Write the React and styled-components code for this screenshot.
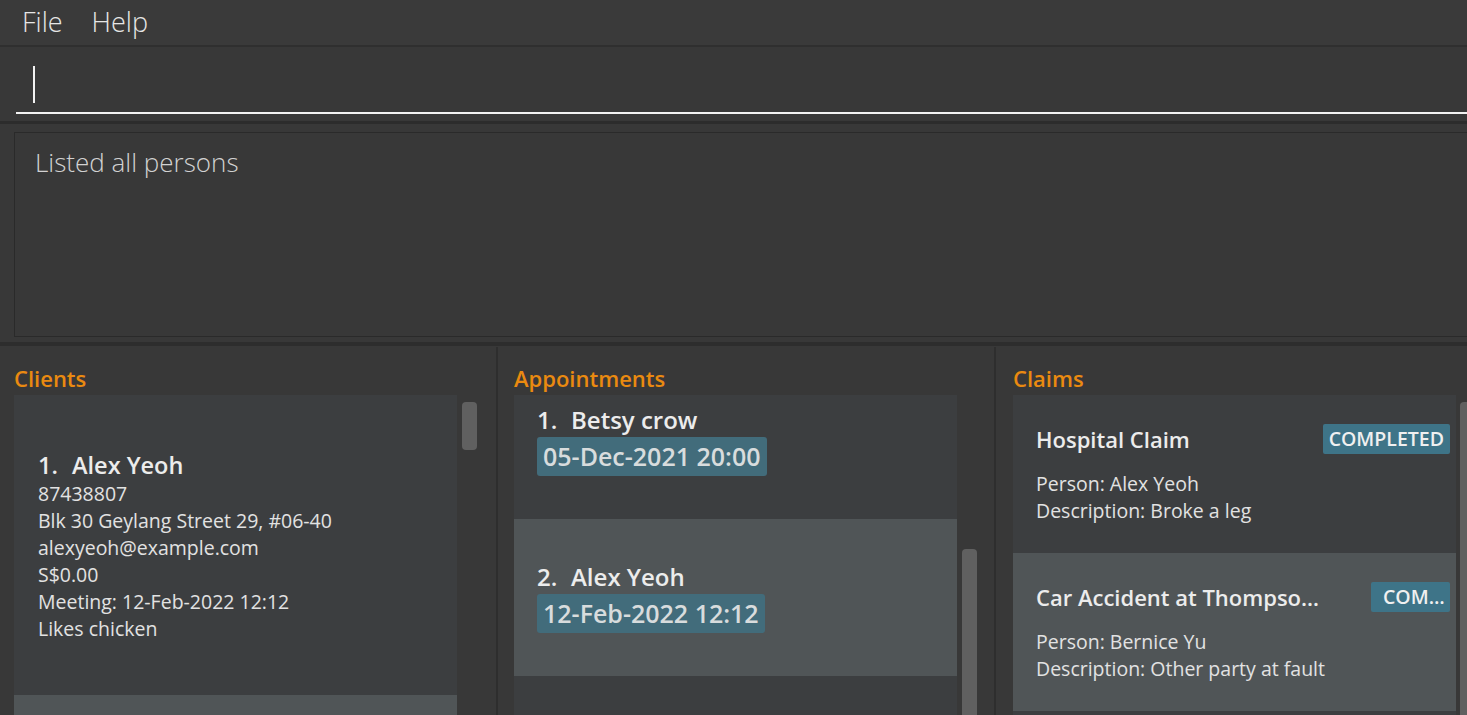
import React from 'react'
import styled, { createGlobalStyle } from 'styled-components'

const GlobalStyle = createGlobalStyle`
  html, body {
    margin: 0;
    padding: 0;
    background: #383838;
  }
  body {
    font-family: 'Open Sans', 'Noto Sans', sans-serif;
    color: #e4e4e4;
  }
  #root {
    height: 715px;
    overflow: hidden;
  }
`

const clients = [
  {
    name: 'Alex Yeoh',
    lines: [
      '87438807',
      'Blk 30 Geylang Street 29, #06-40',
      'alexyeoh@example.com',
      'S$0.00',
      'Meeting: 12-Feb-2022 12:12',
      'Likes chicken',
    ],
  },
]

const appointments = [
  { name: 'Betsy crow', date: '05-Dec-2021 20:00' },
  { name: 'Alex Yeoh', date: '12-Feb-2022 12:12' },
]

const claims = [
  { title: 'Hospital Claim', status: 'COMPLETED', person: 'Alex Yeoh', description: 'Broke a leg' },
  {
    title: 'Car Accident at Thompson Road',
    status: 'COMPLETED',
    person: 'Bernice Yu',
    description: 'Other party at fault',
    squeezed: true,
  },
]

const App = () => (
  <Window>
    <GlobalStyle />
    <MenuBar>
      <MenuItem>File</MenuItem>
      <MenuItem>Help</MenuItem>
    </MenuBar>

    <CommandBox>
      <CommandField>
        <Caret />
      </CommandField>
    </CommandBox>

    <ResultArea>
      <ResultBox>Listed all persons</ResultBox>
    </ResultArea>

    <Panels>
      <Panel $pad={14}>
        <PanelTitle>Clients</PanelTitle>
        <PanelBody>
          <ListView>
            {clients.map((c, i) => (
              <PersonCard key={c.name} $alt={i % 2 === 1}>
                <CardName>
                  <Index>{i + 1}.</Index>
                  {c.name}
                </CardName>
                {c.lines.map(line => (
                  <Detail key={line}>{line}</Detail>
                ))}
              </PersonCard>
            ))}
            {/* empty cells keep the striped look of the list */}
            <EmptyCell $alt={clients.length % 2 === 1} />
          </ListView>
          <ScrollTrack>
            <Thumb $top={7} $height={48} />
          </ScrollTrack>
        </PanelBody>
      </Panel>

      <Panel $pad={16}>
        <PanelTitle>Appointments</PanelTitle>
        <PanelBody>
          <ListView>
            <Scrolled $offset={33}>
              {appointments.map((a, i) => (
                <ApptCard key={a.name} $alt={i % 2 === 1}>
                  <ApptName>
                    <Index>{i + 1}.</Index>
                    {a.name}
                  </ApptName>
                  <DateTag>{a.date}</DateTag>
                </ApptCard>
              ))}
            </Scrolled>
          </ListView>
          <ScrollTrack>
            <Thumb $top={154} $height={240} />
          </ScrollTrack>
        </PanelBody>
      </Panel>

      <Panel $pad={17} $last>
        <PanelTitle>Claims</PanelTitle>
        <PanelBody>
          <ListView>
            {claims.map((c, i) => (
              <ClaimCard key={c.title} $alt={i % 2 === 1}>
                <ClaimHead>
                  <ClaimTitle>{c.title}</ClaimTitle>
                  <Badge $squeezed={c.squeezed}>{c.status}</Badge>
                </ClaimHead>
                <Detail>Person: {c.person}</Detail>
                <Detail>Description: {c.description}</Detail>
              </ClaimCard>
            ))}
          </ListView>
          <ScrollTrack $narrow>
            <Thumb $top={7} $height={400} />
          </ScrollTrack>
        </PanelBody>
      </Panel>
    </Panels>
  </Window>
)

export default App

const Window = styled.div`
  display: flex;
  flex-direction: column;
  height: 715px;
  background: #383838;
`

const MenuBar = styled.div`
  display: flex;
  align-items: center;
  gap: 29px;
  box-sizing: border-box;
  padding: 0 0 3px 22px;
  border-bottom: 2px solid #2f2f2f;
  background: #3a3a3a;
  flex: 0 0 auto;
  height: 47px;
`

const MenuItem = styled.span`
  font-size: 27px;
  font-weight: 300;
  color: #e6e6e6;
`

const CommandBox = styled.div`
  flex: 0 0 auto;
  height: 77px;
  padding-left: 16px;
  border-bottom: 3px solid #2c2c2c;
  box-sizing: border-box;
`

const CommandField = styled.div`
  height: 67px;
  border-bottom: 2px solid #f2f2f2;
  box-sizing: border-box;
  padding: 19px 0 0 17px;
`

const Caret = styled.div`
  width: 2px;
  height: 37px;
  background: #f2f2f2;
`

const ResultArea = styled.div`
  flex: 0 0 auto;
  padding: 8px 0 0 14px;
  height: 222px;
  box-sizing: border-box;
  border-bottom: 4px solid #2d2d2d;
`

const ResultBox = styled.div`
  height: 205px;
  box-sizing: border-box;
  border: 1px solid #2a2a2a;
  border-right: none;
  padding: 11px 20px;
  font-size: 26px;
  font-weight: 300;
  color: #d2d2d2;
`

const Panels = styled.div`
  display: grid;
  grid-template-columns: 498px 498px 1fr;
  flex: 1;
  min-height: 0;
  padding-top: 1px;
`

const Panel = styled.section`
  display: flex;
  flex-direction: column;
  min-height: 0;
  padding-left: ${p => p.$pad}px;
  border-right: ${p => (p.$last ? 'none' : '2px solid #2e2e2e')};
`

const PanelTitle = styled.h2`
  margin: 0;
  height: 48px;
  box-sizing: border-box;
  padding-top: 17px;
  font-size: 22px;
  line-height: 28px;
  font-weight: 600;
  color: #ea8a10;
`

const PanelBody = styled.div`
  display: flex;
  flex: 1;
  min-height: 0;
`

const ListView = styled.div`
  flex: 0 0 443px;
  background: #3c3e40;
  overflow: hidden;
`

const Scrolled = styled.div`
  margin-top: -${p => p.$offset}px;
`

const ScrollTrack = styled.div`
  position: relative;
  flex: 1;
  margin-left: ${p => (p.$narrow ? 4 : 5)}px;
`

const Thumb = styled.div`
  position: absolute;
  left: 0;
  top: ${p => p.$top}px;
  width: 15px;
  height: ${p => p.$height}px;
  border-radius: 4px;
  background: #606060;
`

const CardBase = styled.div`
  background: ${p => (p.$alt ? '#505557' : '#3c3e40')};
  box-sizing: border-box;
  padding-left: 24px;
`

const PersonCard = styled(CardBase)`
  height: 300px;
  display: flex;
  flex-direction: column;
  justify-content: center;
  padding-top: 2px;
`

const EmptyCell = styled(CardBase)`
  height: 300px;
`

const ApptCard = styled(CardBase)`
  height: 157px;
  display: flex;
  flex-direction: column;
  justify-content: center;
  align-items: flex-start;
  padding-left: 23px;
`

const ClaimCard = styled(CardBase)`
  height: 158px;
  display: flex;
  flex-direction: column;
  justify-content: center;
  padding: 0 6px 0 23px;
`

const CardName = styled.div`
  font-size: 23.5px;
  font-weight: 600;
  color: #ececec;
  line-height: 30px;
`

const ApptName = styled(CardName)`
  font-size: 24px;
  line-height: 30px;
`

const Index = styled.span`
  display: inline-block;
  width: 34px;
`

const Detail = styled.div`
  font-size: 19.5px;
  line-height: 27px;
  color: #e2e2e2;
`

const DateTag = styled.div`
  margin-top: 2px;
  padding: 0 6px;
  height: 39px;
  line-height: 39px;
  border-radius: 3px;
  background: #426c7b;
  color: #d8dcdd;
  font-size: 25px;
  font-weight: 600;
`

const ClaimHead = styled.div`
  display: flex;
  align-items: center;
  justify-content: space-between;
  gap: 50px;
  margin: 0 0 16px;
`

const ClaimTitle = styled.div`
  min-width: 0;
  max-width: 284px;
  white-space: nowrap;
  overflow: hidden;
  text-overflow: ellipsis;
  font-size: 22px;
  font-weight: 600;
  color: #ececec;
`

const Badge = styled.div`
  flex: 0 0 auto;
  max-width: ${p => (p.$squeezed ? '79px' : 'none')};
  box-sizing: border-box;
  padding: ${p => (p.$squeezed ? '0 4px 0 12px' : '0 6px')};
  height: 30px;
  line-height: 30px;
  border-radius: 2px;
  background: #3e7488;
  color: #f0f0f0;
  font-size: 19.5px;
  font-weight: 600;
  white-space: nowrap;
  overflow: hidden;
  text-overflow: ellipsis;
`
